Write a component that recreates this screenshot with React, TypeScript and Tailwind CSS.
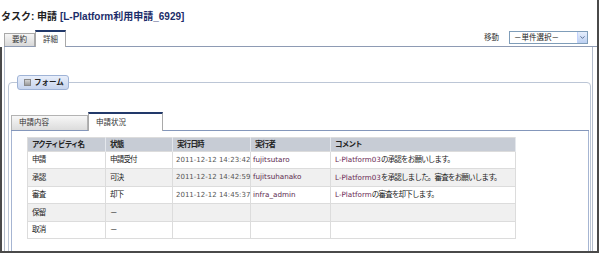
import { ChevronDown } from "lucide-react";

type Row = {
  name: string;
  status: string;
  date: string;
  user: string;
  comment: { text: string; mark?: boolean }[];
};

const rows: Row[] = [
  {
    name: "申請",
    status: "申請受付",
    date: "2011-12-12 14:23:42",
    user: "fujitsutaro",
    comment: [{ text: "L-Platform03", mark: true }, { text: "の承認をお願いします。" }],
  },
  {
    name: "承認",
    status: "可決",
    date: "2011-12-12 14:42:59",
    user: "fujitsuhanako",
    comment: [{ text: "L-Platform03", mark: true }, { text: "を承認しました。審査をお願いします。" }],
  },
  {
    name: "審査",
    status: "却下",
    date: "2011-12-12 14:45:37",
    user: "infra_admin",
    comment: [{ text: "L-Platform", mark: true }, { text: "の審査を却下します。" }],
  },
  { name: "保留", status: "－", date: "", user: "", comment: [] },
  { name: "取消", status: "－", date: "", user: "", comment: [] },
];

const heads = ["アクティビティ名", "状態", "実行日時", "実行者", "コメント"];
const widths = ["w-[78px]", "w-[67px]", "w-[78px]", "w-[80px]", "w-[185px]"];

export default function App() {
  return (
    <div className="w-[600px] h-[254px] bg-white overflow-hidden font-['Liberation_Sans','Noto_Sans_CJK_JP',sans-serif] text-[#222]">
      <div className="w-[599px] h-[253px] border-r-2 border-b-2 border-[#4a4a4a] flex flex-col overflow-hidden">
        {/* title */}
        <h1 className="shrink-0 h-[30px] pt-[10px] pl-[1px] text-[10px] font-bold leading-[14px] whitespace-nowrap">
          タスク: 申請 <span className="text-[#1c2d6a]">[L-Platform利用申請_6929]</span>
        </h1>

        {/* top tabs */}
        <div className="shrink-0 ml-[4px] h-[17px] flex items-end border-b border-[#8e9bb4]">
          <div className="w-[31px] h-[13px] flex items-center justify-center border border-b-0 border-[#a9a9a9] bg-linear-to-b from-[#f6f6f6] to-[#d8d8d8] text-[7.5px] text-[#333]">
            要約
          </div>
          <div className="relative -mb-px w-[31px] h-[17px] flex items-center justify-center border-x border-t-2 border-[#a9a9a9] border-t-[#22396a] bg-white text-[7.5px] text-[#333]">
            詳細
          </div>
          <div className="flex-1" />
          <span className="self-center mb-[1px] mr-[10px] text-[7.5px] text-[#333]">移動</span>
          <div className="self-center mb-[1px] mr-[9px] w-[79px] h-[13px] flex items-stretch border border-[#7f9db9] bg-white">
            <span className="flex-1 pl-[4px] text-[7.5px] leading-[11px] text-[#222]">－単件選択－</span>
            <span className="w-[10px] flex items-center justify-center bg-linear-to-b from-[#e6eefc] to-[#bcd0f2] border-l border-[#c3d3fd]">
              <ChevronDown size={7} strokeWidth={3} className="text-[#4d6185]" />
            </span>
          </div>
        </div>

        {/* body */}
        <div className="flex-1 min-h-0 border-l-2 border-[#4a4a4a] pl-[2px]">
          <div className="w-[589px] h-full border-x border-[#b3bccb] pt-[28px]">
            <fieldset className="ml-[3px] w-[583px] min-w-0 h-[200px] border border-[#bcc6d6] rounded-t-[4px] p-0 m-0">
              <legend className="ml-[8px] p-0">
                <div className="h-[15px] w-[52px] flex items-center gap-[3px] pl-[6px] rounded-[3px] border border-[#9fb3d6] bg-linear-to-b from-[#e8eefa] to-[#c7d5ee] text-[7.5px] font-bold text-[#222]">
                  <span className="w-[7px] h-[7px] border border-[#8a8a8a] bg-linear-to-b from-[#d4d4d4] to-[#9a9a9a]" />
                  フォーム
                </div>
              </legend>

              <div className="ml-[2px] w-[578px] pt-[22px]">
                {/* inner tabs */}
                <div className="h-[19px] flex items-end border-b border-[#8497bb]">
                  <div className="w-[77px] h-[15px] flex items-center pl-[7px] border border-b-0 border-[#b3b3b3] bg-linear-to-b from-[#f7f7f7] to-[#dcdcdc] text-[7.5px] text-[#333]">
                    申請内容
                  </div>
                  <div className="relative -mb-px w-[75px] h-[19px] flex items-center pl-[7px] border-x border-t-2 border-[#a9a9a9] border-t-[#22396a] bg-white text-[7.5px] text-[#333]">
                    申請状況
                  </div>
                </div>

                <div className="h-[200px] border-x border-[#a6b5d2] pt-[6px] pl-[15px]">
                  <table className="w-[488px] table-fixed border-collapse border border-[#dcdcdc] font-['DejaVu_Sans','Noto_Sans_CJK_JP',sans-serif] text-[7.5px] tracking-[-0.8px] text-[#222]">
                    <thead>
                      <tr className="h-[13px] bg-[#c7ccd5]">
                        {heads.map((h, i) => (
                          <th
                            key={h}
                            className={`${widths[i]} px-[4px] text-left font-bold border-r border-[#e4e7ec] leading-[13px]`}
                          >
                            {h}
                          </th>
                        ))}
                      </tr>
                    </thead>
                    <tbody>
                      {rows.map((r, i) => (
                        <tr key={r.name} className={`${i % 2 === 1 ? "bg-[#f0f0f0]" : "bg-white"} ${i % 2 === 0 ? "h-[17px]" : "h-[18px]"}`}>
                          <td className="px-[4px] border border-[#dcdcdc]">{r.name}</td>
                          <td className="px-[4px] border border-[#dcdcdc]">{r.status}</td>
                          <td className="px-[3px] border border-[#dcdcdc] text-[7px] tracking-normal text-[#555] whitespace-nowrap">{r.date}</td>
                          <td className="px-[2px] border border-[#dcdcdc] text-[7.2px] tracking-normal text-[#5c2b4f] whitespace-nowrap">{r.user}</td>
                          <td className="px-[4px] border border-[#dcdcdc] whitespace-nowrap">
                            {r.comment.map((c) => (
                              <span key={c.text} className={c.mark ? "text-[7.2px] tracking-normal text-[#6b2a55]" : ""}>
                                {c.text}
                              </span>
                            ))}
                          </td>
                        </tr>
                      ))}
                    </tbody>
                  </table>
                </div>
              </div>
            </fieldset>
          </div>
        </div>
      </div>
    </div>
  );
}
